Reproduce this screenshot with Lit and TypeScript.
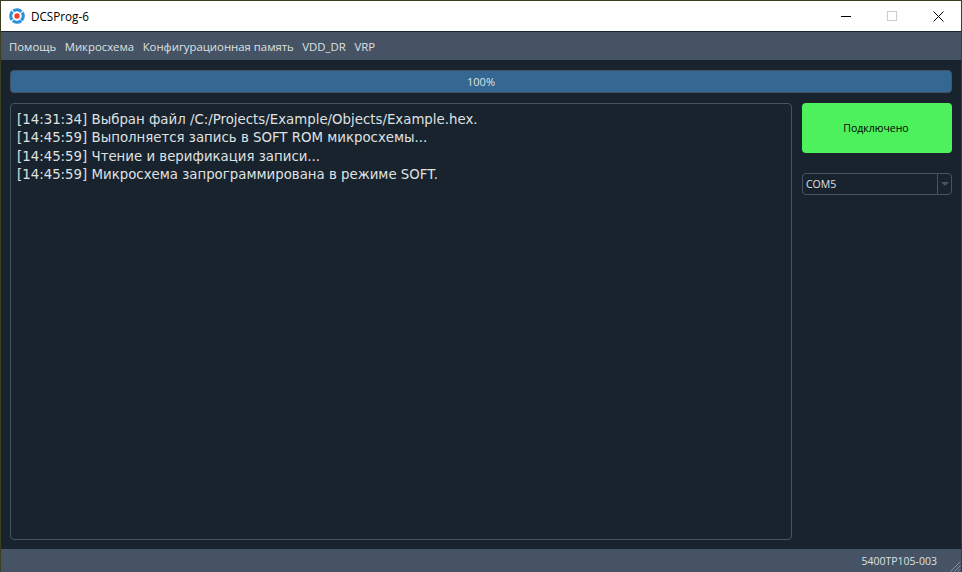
import { LitElement, html, css } from "lit";
import { customElement } from "lit/decorators.js";

const LOG = [
  "[14:31:34] Выбран файл /C:/Projects/Example/Objects/Example.hex.",
  "[14:45:59] Выполняется запись в SOFT ROM микросхемы...",
  "[14:45:59] Чтение и верификация записи...",
  "[14:45:59] Микросхема запрограммирована в режиме SOFT.",
];
const MENU = ["Помощь", "Микросхема", "Конфигурационная память", "VDD_DR", "VRP"];

@customElement("app-root")
export class AppRoot extends LitElement {
  static styles = css`
    :host { display: block; width: 962px; height: 572px; background: #3a3f22; font-family: "Open Sans", "Noto Sans", sans-serif; font-size: 12px; overflow: hidden; }
    .win { height: 571px; margin: 1px 1px 0 1px; display: flex; flex-direction: column; background: #19232d; }
    .title { height: 30px; flex: none; background: #fff; display: flex; align-items: center; color: #000; border-bottom: 1px solid #19232d; }
    .logo { width: 16px; height: 16px; margin: 0 6px 0 8px; }
    .name { flex: 1; font-size: 11.7px; }
    .wbtn { width: 46px; height: 30px; display: flex; align-items: center; justify-content: center; }
    .menu { height: 28px; flex: none; background: #455364; color: #dfe1e2; display: flex; align-items: center; padding-left: 8px; gap: 8.6px; font-size: 11.35px; }
    .body { flex: 1; display: flex; flex-direction: column; padding: 10px 9px 9px 9px; gap: 10px; min-height: 0; }
    .bar { height: 23px; flex: none; box-sizing: border-box; background: #346792; border: 1px solid #455364; border-radius: 4px; color: #dfe1e2; display: flex; align-items: center; justify-content: center; font-size: 11px; }
    .main { flex: 1; display: flex; gap: 10px; min-height: 0; }
    .log { flex: 1; box-sizing: border-box; border: 1px solid #455364; border-radius: 4px; padding: 7px 6px 6px; font-family: "DejaVu Sans", sans-serif; font-size: 13.33px; line-height: 18.3px; color: #dfe1e2; white-space: pre; }
    .side { width: 150px; flex: none; display: flex; flex-direction: column; gap: 20px; }
    .conn { height: 50px; background: #4cf15c; border-radius: 4px; color: #000; display: flex; align-items: center; justify-content: center; font-size: 10.5px; padding-right: 2px; box-sizing: border-box; }
    .combo { height: 22px; box-sizing: border-box; border: 1px solid #455364; border-radius: 4px; display: flex; align-items: stretch; color: #dfe1e2; font-size: 10.5px; }
    .val { flex: 1; display: flex; align-items: center; padding-left: 3px; }
    .arrow { width: 13px; border-left: 1px solid #455364; display: flex; align-items: center; justify-content: center; }
    .arrow i { width: 0; height: 0; border-left: 4px solid transparent; border-right: 4px solid transparent; border-top: 4px solid #455364; }
    .status { height: 23px; flex: none; background: #455364; color: #dfe1e2; display: flex; align-items: center; justify-content: flex-end; font-size: 10.5px; padding-right: 24px; position: relative; }
    .grip { position: absolute; right: 0; bottom: 0; width: 12px; height: 12px; }
  `;

  render() {
    return html`<div class="win">
      <div class="title">
        <svg class="logo" viewBox="0 0 16 16">
          <circle cx="8" cy="8" r="6.2" fill="none" stroke="#2d8fe0" stroke-width="3.2" stroke-dasharray="8.6 1.13" stroke-dashoffset="-0.5" transform="rotate(45 8 8)"/>
          <circle cx="8" cy="8" r="2.7" fill="#f0402e"/>
        </svg>
        <span class="name">DCSProg-6</span>
        <div class="wbtn"><svg width="12" height="10"><path d="M1 5.5H11" stroke="#000"/></svg></div>
        <div class="wbtn"><svg width="10" height="10"><rect x=".5" y=".5" width="9" height="9" fill="none" stroke="#ccc"/></svg></div>
        <div class="wbtn"><svg width="11" height="11"><path d="M.5 .5L10.5 10.5M10.5 .5L.5 10.5" stroke="#000"/></svg></div>
      </div>
      <div class="menu">${MENU.map((m) => html`<span>${m}</span>`)}</div>
      <div class="body">
        <div class="bar">100%</div>
        <div class="main">
          <div class="log">${LOG.map((l) => html`<div>${l}</div>`)}</div>
          <div class="side">
            <div class="conn">Подключено</div>
            <div class="combo"><div class="val">COM5</div><div class="arrow"><i></i></div></div>
          </div>
        </div>
      </div>
      <div class="status">5400TP105-003
        <svg class="grip" viewBox="0 0 12 12"><path d="M11.5 1.5L1.5 11.5M11.5 5.5L5.5 11.5M11.5 9L9 11.5" stroke="#8a95a1" fill="none"/></svg>
      </div>
    </div>`;
  }
}
